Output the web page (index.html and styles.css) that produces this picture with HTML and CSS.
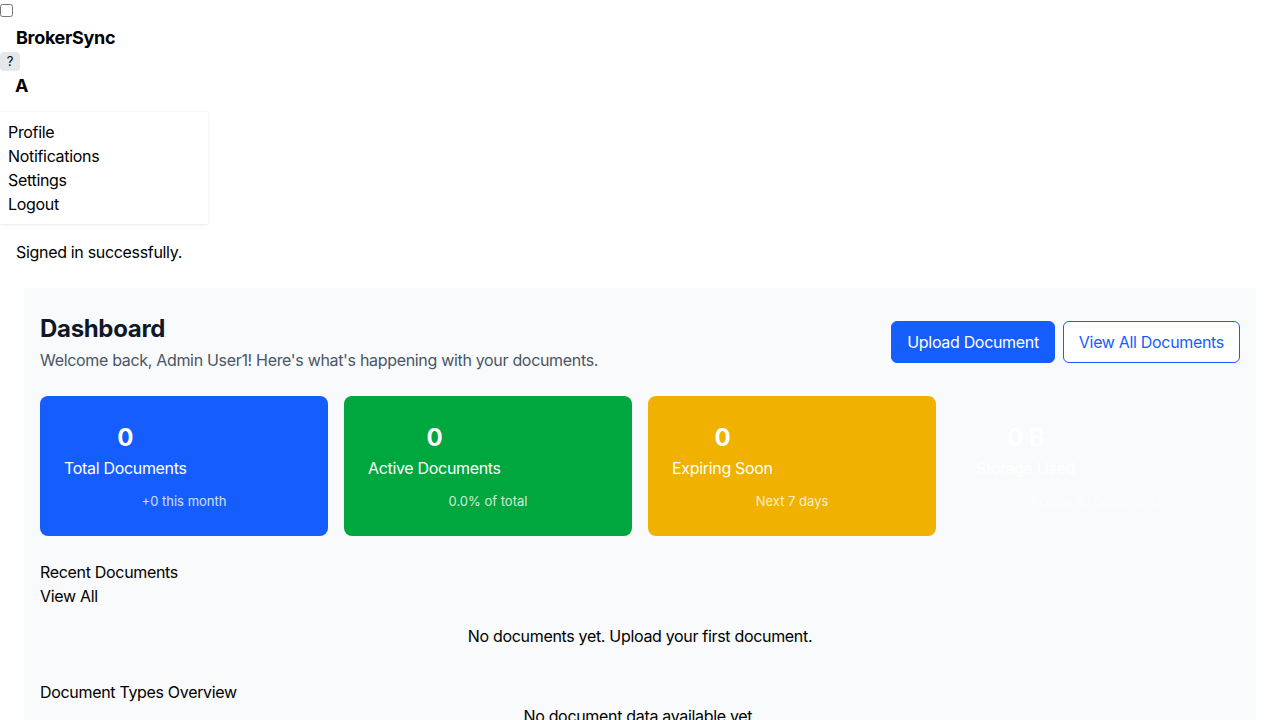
FILE: index.html
```html
<!DOCTYPE html>
<html lang="en">
<head>
<meta charset="utf-8">
<title>BrokerSync</title>
<link rel="stylesheet" href="styles.css">
</head>
<body>
<header class="topbar">
  <input type="checkbox" class="nav-toggle">
  <div class="brand">BrokerSync</div>
  <button class="help-btn">?</button>
  <div class="avatar">A</div>
  <ul class="user-menu">
    <li>Profile</li>
    <li>Notifications</li>
    <li>Settings</li>
    <li>Logout</li>
  </ul>
</header>
<div class="flash">Signed in successfully.</div>
<main class="main">
  <div class="page-head">
    <div class="page-title">
      <h1>Dashboard</h1>
      <p>Welcome back, Admin User1! Here's what's happening with your documents.</p>
    </div>
    <div class="actions">
      <button class="btn btn-primary">Upload Document</button>
      <button class="btn btn-outline">View All Documents</button>
    </div>
  </div>
  <div class="stats">
    <div class="stat stat-blue">
      <div class="stat-main"><div class="stat-value">0</div><div class="stat-label">Total Documents</div></div>
      <div class="stat-foot">+0 this month</div>
    </div>
    <div class="stat stat-green">
      <div class="stat-main"><div class="stat-value">0</div><div class="stat-label">Active Documents</div></div>
      <div class="stat-foot">0.0% of total</div>
    </div>
    <div class="stat stat-yellow">
      <div class="stat-main"><div class="stat-value">0</div><div class="stat-label">Expiring Soon</div></div>
      <div class="stat-foot">Next 7 days</div>
    </div>
    <div class="stat stat-purple">
      <div class="stat-main"><div class="stat-value">0 B</div><div class="stat-label">Storage Used</div></div>
      <div class="stat-foot">Across all documents</div>
    </div>
  </div>
  <section class="section">
    <div>Recent Documents</div>
    <div>View All</div>
    <div class="empty">No documents yet. Upload your first document.</div>
  </section>
  <section class="section section-types">
    <div>Document Types Overview</div>
    <div class="empty empty-chart">No document data available yet.</div>
  </section>
</main>
</body>
</html>
```
FILE: styles.css
```css
* { box-sizing: border-box; }
html, body { margin: 0; padding: 0; }
body {
  font-family: Inter, "Noto Sans", sans-serif;
  font-size: 16px;
  line-height: 24px;
  letter-spacing: -0.02em;
  color: #000;
  background: #fff;
}
.topbar { display: block; }
.nav-toggle {
  display: block;
  width: 13px;
  height: 13px;
  margin: 4px 0 0 0;
}
.brand {
  font-size: 18px;
  font-weight: 700;
  line-height: 28px;
  padding: 0 16px;
  margin-top: 7px;
}
.help-btn {
  display: block;
  margin: 0;
  width: 20px;
  height: 19px;
  padding: 0;
  border: 0;
  border-radius: 4px;
  background: #e5e7eb;
  font-family: inherit;
  font-size: 13px;
  line-height: 19px;
  text-align: center;
  color: #000;
}
.avatar {
  font-size: 18px;
  font-weight: 700;
  line-height: 28px;
  padding: 0 15px;
  margin-top: 1px;
}
.user-menu {
  list-style: none;
  margin: 12px 0 0 0;
  padding: 8px;
  width: 208px;
  background: #fff;
  box-shadow: 0 1px 3px rgba(0,0,0,0.08), 0 0 1px rgba(0,0,0,0.06);
}
.flash { padding: 16px; }
.main {
  margin: 8px 24px 0;
  padding: 24px 16px 16px;
  background: #f9fafb;
  min-height: 460px;
}
.page-head {
  display: flex;
  align-items: center;
  justify-content: space-between;
}
.page-title h1 {
  margin: 1px 0 0;
  font-size: 24px;
  line-height: 32px;
  font-weight: 700;
  color: #101828;
}
.page-title p {
  margin: 3px 0 0;
  color: #4a5565;
}
.actions { display: flex; gap: 8px; }
.btn {
  font-family: inherit;
  font-size: 16px;
  line-height: 24px;
  letter-spacing: -0.02em;
  padding: 8px 15px;
  border-radius: 6px;
  border: 1px solid #155dfc;
  cursor: pointer;
}
.btn-primary { background: #155dfc; color: #fff; }
.btn-outline { background: #fff; color: #155dfc; }
.stats {
  display: grid;
  grid-template-columns: repeat(4, 1fr);
  gap: 16px;
  margin-top: 24px;
}
.stat {
  border-radius: 8px;
  padding: 24px;
  color: #fff;
  height: 140px;
}
.stat-blue { background: #155dfc; }
.stat-green { background: #00a63e; }
.stat-yellow { background: #f0b100; }
.stat-purple { background: transparent; }
.stat-main {
  display: inline-block;
  text-align: center;
}
.stat-value {
  font-size: 24px;
  line-height: 32px;
  font-weight: 700;
  margin-top: 2px;
}
.stat-label { margin-top: 2px; }
.stat-foot {
  margin-top: 11px;
  text-align: center;
  font-size: 13px;
  line-height: 20px;
  letter-spacing: 0;
  opacity: 0.8;
}
.section { margin-top: 24px; }
.section + .section { margin-top: 16px; }
.empty {
  text-align: center;
  padding: 16px 0;
}
.empty-chart { padding-top: 0; }
```
